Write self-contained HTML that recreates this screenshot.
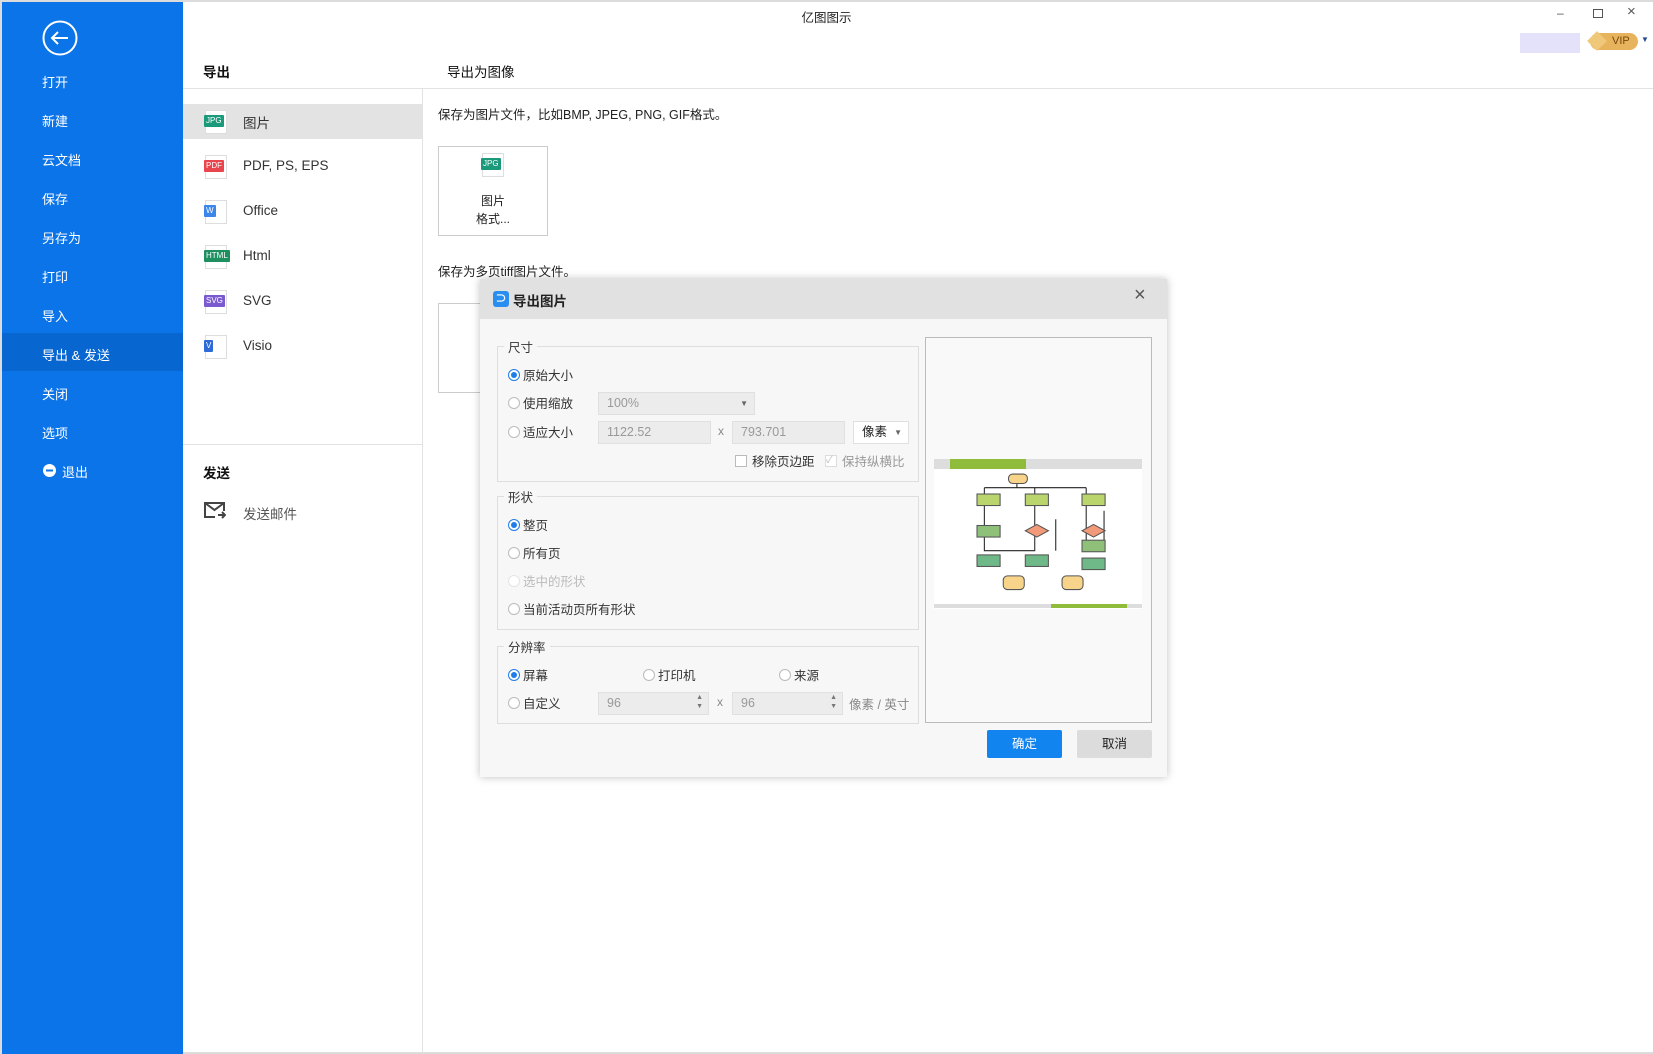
<!DOCTYPE html>
<html><head><meta charset="utf-8"><style>
*{box-sizing:border-box;margin:0;padding:0}
body{width:1653px;height:1054px;position:relative;background:#fff;font-family:"Liberation Sans","Noto Sans CJK SC",sans-serif;font-size:13px;color:#333;overflow:hidden}
.a{position:absolute;white-space:nowrap}
.side{position:absolute;left:2px;top:2px;width:181px;height:1052px;background:#0b74e9}
.side .m{position:absolute;left:40px;color:#fff;font-size:13px}
.sel{position:absolute;left:2px;top:333px;width:181px;height:38px;background:#0866d0}
.ico{position:absolute;width:22px;height:24px;border:1px solid #ddd;background:#fff}
.ico b{position:absolute;left:-2px;top:4px;height:12px;padding:0 2px;font-size:8px;line-height:12px;color:#fff;font-weight:normal;border-radius:1px}
.fs{position:absolute;border:1px solid #dedede}
.lg{position:absolute;background:#f7f7f7;padding:0 4px;font-size:12.5px;color:#333}
.r{position:absolute;width:12px;height:12px;border:1px solid #bbb;border-radius:50%;background:#fff}
.r.on::after{content:"";position:absolute;left:2px;top:2px;width:6px;height:6px;border-radius:50%;background:#1f7de8}
.r.on{border-color:#1f7de8}
.inp{position:absolute;height:23px;background:#ececec;border:1px solid #e0e0e0;color:#999;font-size:12.5px;line-height:21px;padding-left:8px}
</style></head><body>
<div class="a" style="left:0;top:0;width:1653px;height:2px;background:#dcdcdc"></div>
<div class="a" style="left:0;top:0;width:2px;height:1054px;background:#dcdcdc"></div>
<div class="a" style="left:0;top:1052px;width:1653px;height:2px;background:#dcdcdc"></div>
<div class="side"></div>
<div class="sel"></div>
<svg class="a" style="left:41px;top:19px" width="38" height="38"><circle cx="19" cy="19" r="16.5" fill="none" stroke="#fff" stroke-width="2"/><path d="M27 19H11M17 13l-6 6 6 6" fill="none" stroke="#fff" stroke-width="2"/></svg>
<div class="side" style="background:none">
<span class="m" style="top:70px">打开</span>
<span class="m" style="top:109px">新建</span>
<span class="m" style="top:148px">云文档</span>
<span class="m" style="top:187px">保存</span>
<span class="m" style="top:226px">另存为</span>
<span class="m" style="top:265px">打印</span>
<span class="m" style="top:304px">导入</span>
<span class="m" style="top:343px">导出 &amp; 发送</span>
<span class="m" style="top:382px">关闭</span>
<span class="m" style="top:421px">选项</span>
<span class="m" style="top:460px;left:60px">退出</span>
</div>
<svg class="a" style="left:43px;top:464px" width="13" height="13"><circle cx="6.5" cy="6.5" r="6.5" fill="#fff"/><rect x="3" y="5.5" width="7" height="2" fill="#0b74e9"/></svg>

<div class="a" style="left:0;top:7px;width:1653px;text-align:center;font-size:12.5px;color:#222">亿图图示</div>
<div class="a" style="left:1557px;top:6px;font-size:12px;color:#555">–</div>
<div class="a" style="left:1593px;top:9px;width:10px;height:9px;border:1px solid #555"></div>
<div class="a" style="left:1627px;top:3px;font-size:15px;color:#555">×</div>
<div class="a" style="left:1520px;top:33px;width:60px;height:20px;background:#e4e2fb"></div>
<div class="a" style="left:1590px;top:33px;width:48px;height:17px;border-radius:9px;background:#e7b35c;color:#7a4a10;font-size:11px;line-height:17px;padding-left:22px">VIP</div>
<div class="a" style="left:1590px;top:34px;width:14px;height:14px;background:#f0c879;transform:rotate(45deg)"></div>
<div class="a" style="left:1641px;top:35px;font-size:8px;color:#2a4a8a">▼</div>

<div class="a" style="left:183px;top:88px;width:1470px;height:1px;background:#e2e2e2"></div>
<div class="a" style="left:422px;top:88px;width:1px;height:966px;background:#e2e2e2"></div>
<div class="a" style="left:183px;top:444px;width:239px;height:1px;background:#e2e2e2"></div>
<div class="a" style="left:203px;top:61px;font-weight:bold;font-size:13.5px;color:#111">导出</div>
<div class="a" style="left:447px;top:61px;font-size:13.5px;color:#111">导出为图像</div>
<div class="a" style="left:183px;top:104px;width:239px;height:35px;background:#e3e3e3"></div>
<div class="ico" style="left:205px;top:110px"><b style="background:#1a9a7a">JPG</b></div>
<div class="ico" style="left:205px;top:155px"><b style="background:#e8454e">PDF</b></div>
<div class="ico" style="left:205px;top:200px"><b style="background:#3b86e8">W</b></div>
<div class="ico" style="left:205px;top:245px"><b style="background:#1e9060">HTML</b></div>
<div class="ico" style="left:205px;top:290px"><b style="background:#7b5ad0">SVG</b></div>
<div class="ico" style="left:205px;top:335px"><b style="background:#2f6bd6">V</b></div>
<div class="a" style="left:243px;top:112px;font-size:13.5px">图片</div>
<div class="a" style="left:243px;top:158px;font-size:13.5px">PDF, PS, EPS</div>
<div class="a" style="left:243px;top:203px;font-size:13.5px">Office</div>
<div class="a" style="left:243px;top:248px;font-size:13.5px">Html</div>
<div class="a" style="left:243px;top:293px;font-size:13.5px">SVG</div>
<div class="a" style="left:243px;top:338px;font-size:13.5px">Visio</div>
<div class="a" style="left:203px;top:462px;font-weight:bold;font-size:13.5px;color:#111">发送</div>
<svg class="a" style="left:204px;top:502px" width="22" height="18"><path d="M11 15H1V1h19v8M1 1l9.5 7L20 1M14 13h7M18 10l3 3-3 3" fill="none" stroke="#444" stroke-width="2"/></svg>
<div class="a" style="left:243px;top:503px;font-size:13.5px;color:#555">发送邮件</div>

<div class="a" style="left:438px;top:104px;font-size:12.5px;color:#222">保存为图片文件，比如BMP, JPEG, PNG, GIF格式。</div>
<div class="a" style="left:438px;top:146px;width:110px;height:90px;border:1px solid #ccc"></div>
<div class="ico" style="left:482px;top:153px"><b style="background:#1a9a7a">JPG</b></div>
<div class="a" style="left:438px;top:192px;width:110px;text-align:center;font-size:12px;line-height:18px;color:#222">图片<br>格式...</div>
<div class="a" style="left:438px;top:261px;font-size:12.5px;color:#222">保存为多页tiff图片文件。</div>
<div class="a" style="left:438px;top:303px;width:110px;height:90px;border:1px solid #ccc"></div>

<div class="a" style="left:480px;top:279px;width:687px;height:498px;background:#f7f7f7;box-shadow:0 0 8px rgba(0,0,0,.25)">
<div class="a" style="left:0;top:0;width:687px;height:40px;background:#e1e1e1"></div>
<div class="a" style="left:13px;top:12px;width:16px;height:16px;border-radius:3px;background:#2a8ef0;color:#fff;font-size:11px;line-height:16px;text-align:center;font-weight:bold">⊃</div>
<div class="a" style="left:33px;top:11px;font-size:13.5px;font-weight:bold;color:#222">导出图片</div>
<div class="a" style="left:654px;top:5px;font-size:20px;color:#555">×</div>

<div class="fs" style="left:17px;top:67px;width:422px;height:136px"></div>
<div class="lg" style="left:24px;top:58px">尺寸</div>
<div class="fs" style="left:17px;top:217px;width:422px;height:134px"></div>
<div class="lg" style="left:24px;top:208px">形状</div>
<div class="fs" style="left:17px;top:367px;width:422px;height:78px"></div>
<div class="lg" style="left:24px;top:358px">分辨率</div>

<div class="r on" style="left:28px;top:90px"></div><div class="a" style="left:43px;top:86px;font-size:12.5px">原始大小</div>
<div class="r" style="left:28px;top:118px"></div><div class="a" style="left:43px;top:114px;font-size:12.5px">使用缩放</div>
<div class="inp" style="left:118px;top:113px;width:157px">100%<span style="position:absolute;right:6px;font-size:8px;color:#666">▼</span></div>
<div class="r" style="left:28px;top:147px"></div><div class="a" style="left:43px;top:143px;font-size:12.5px">适应大小</div>
<div class="inp" style="left:118px;top:142px;width:113px">1122.52</div>
<div class="a" style="left:238px;top:145px;color:#888;font-size:12px">x</div>
<div class="inp" style="left:252px;top:142px;width:113px">793.701</div>
<div class="inp" style="left:373px;top:142px;width:56px;background:#fff;color:#222">像素<span style="position:absolute;right:6px;font-size:8px;color:#666">▼</span></div>
<div class="a" style="left:255px;top:176px;width:12px;height:12px;border:1px solid #bbb;background:#fff"></div>
<div class="a" style="left:272px;top:172px;font-size:12.5px">移除页边距</div>
<div class="a" style="left:345px;top:176px;width:12px;height:12px;border:1px solid #ddd;background:#fff;font-size:10px;line-height:10px;color:#bbb">✓</div>
<div class="a" style="left:362px;top:172px;font-size:12.5px;color:#999">保持纵横比</div>

<div class="r on" style="left:28px;top:240px"></div><div class="a" style="left:43px;top:236px;font-size:12.5px">整页</div>
<div class="r" style="left:28px;top:268px"></div><div class="a" style="left:43px;top:264px;font-size:12.5px">所有页</div>
<div class="r" style="left:28px;top:296px;border-color:#e4e4e4"></div><div class="a" style="left:43px;top:292px;font-size:12.5px;color:#bbb">选中的形状</div>
<div class="r" style="left:28px;top:324px"></div><div class="a" style="left:43px;top:320px;font-size:12.5px">当前活动页所有形状</div>

<div class="r on" style="left:28px;top:390px"></div><div class="a" style="left:43px;top:386px;font-size:12.5px">屏幕</div>
<div class="r" style="left:163px;top:390px"></div><div class="a" style="left:178px;top:386px;font-size:12.5px">打印机</div>
<div class="r" style="left:299px;top:390px"></div><div class="a" style="left:314px;top:386px;font-size:12.5px">来源</div>
<div class="r" style="left:28px;top:418px"></div><div class="a" style="left:43px;top:414px;font-size:12.5px">自定义</div>
<div class="inp" style="left:118px;top:413px;width:111px">96<span style="position:absolute;right:5px;top:0;font-size:7px;line-height:9px;color:#777">▲<br>▼</span></div>
<div class="a" style="left:237px;top:416px;color:#888;font-size:12px">x</div>
<div class="inp" style="left:252px;top:413px;width:111px">96<span style="position:absolute;right:5px;top:0;font-size:7px;line-height:9px;color:#777">▲<br>▼</span></div>
<div class="a" style="left:369px;top:415px;font-size:12.5px;color:#888">像素 / 英寸</div>

<div class="a" style="left:445px;top:58px;width:227px;height:386px;border:1px solid #bbb;background:#f9f9f9"></div>
<div class="a" style="left:454px;top:180px;width:208px;height:150px;background:#fff"></div>
<div class="a" style="left:454px;top:180px;width:208px;height:10px;background:#ddd"></div>
<div class="a" style="left:470px;top:180px;width:76px;height:10px;background:#8fbc3a"></div>
<div class="a" style="left:454px;top:325px;width:208px;height:4px;background:#ddd"></div>
<div class="a" style="left:571px;top:325px;width:76px;height:4px;background:#8fbc3a"></div>
<svg class="a" style="left:454px;top:190px" width="208" height="135" viewBox="0 0 208 135">
<g transform="translate(22,4) scale(1.05)">
<g fill="none" stroke="#222" stroke-width="1"><path d="M58 7v7M27 14h97M27 14v60h48V60M75 14v60M124 14v60h17V36M95 74v-30M27 40V14"/></g>
<rect x="50" y="1" width="18" height="9" rx="4" fill="#f8d48a" stroke="#555"/>
<rect x="20" y="20" width="22" height="11" fill="#b9d56c" stroke="#555"/>
<rect x="66" y="20" width="22" height="11" fill="#b9d56c" stroke="#555"/>
<rect x="120" y="20" width="22" height="11" fill="#b9d56c" stroke="#555"/>
<rect x="20" y="50" width="22" height="11" fill="#8ec07a" stroke="#555"/>
<path d="M77 49l11 6-11 6-11-6z" fill="#f2997a" stroke="#555"/>
<path d="M131 49l11 6-11 6-11-6z" fill="#f2997a" stroke="#555"/>
<rect x="120" y="64" width="22" height="11" fill="#8ec07a" stroke="#555"/>
<rect x="20" y="78" width="22" height="11" fill="#6fb888" stroke="#555"/>
<rect x="66" y="78" width="22" height="11" fill="#6fb888" stroke="#555"/>
<rect x="120" y="81" width="22" height="11" fill="#6fb888" stroke="#555"/>
<rect x="45" y="98" width="20" height="13" rx="4" fill="#f8d48a" stroke="#555"/>
<rect x="101" y="98" width="20" height="13" rx="4" fill="#f8d48a" stroke="#555"/>
</g>
</svg>

<div class="a" style="left:507px;top:451px;width:75px;height:28px;background:#1184f0;border-radius:2px;color:#fff;text-align:center;line-height:28px;font-size:12.5px">确定</div>
<div class="a" style="left:597px;top:451px;width:75px;height:28px;background:#dcdcdc;border-radius:2px;color:#222;text-align:center;line-height:28px;font-size:12.5px">取消</div>
</div>
</body></html>
